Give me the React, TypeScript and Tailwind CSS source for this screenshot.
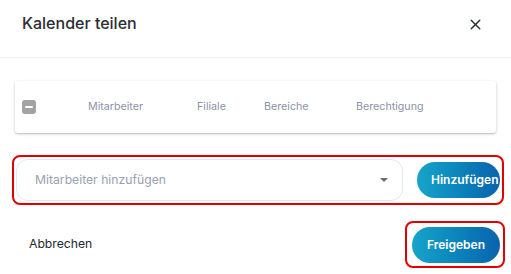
import { X } from 'lucide-react';

const columns = [
  { label: 'Mitarbeiter', width: 'w-[109px]' },
  { label: 'Filiale', width: 'w-[67px]' },
  { label: 'Bereiche', width: 'w-[92px]' },
  { label: 'Berechtigung', width: 'w-[100px]' },
];

export default function App() {
  return (
    <div className="w-[511px] h-[274px] bg-white overflow-hidden font-['Inter',sans-serif]">
      {/* Kopfzeile */}
      <div className="h-[58px] flex items-start justify-between px-[22px] pt-[12px] border-b border-[#f1f2f4]">
        <h2 className="text-[16px] leading-[22px] font-medium text-[#2a2d34]">Kalender teilen</h2>
        <button className="mt-[4px] mr-[5px] text-[#2a2d34]" title="Schließen">
          <X size={17} strokeWidth={2} />
        </button>
      </div>

      {/* Tabelle */}
      <div className="mx-[15px] mt-[23px] h-[52px] rounded-[3px] bg-white shadow-[0_1px_3px_rgba(0,0,0,0.22),0_1px_1px_rgba(0,0,0,0.08)] flex items-center">
        <div className="pl-[7px] w-[73px]">
          <span className="flex items-center justify-center w-[14px] h-[14px] rounded-[3px] bg-[#a3a3a3]">
            <span className="w-[8px] h-[2px] bg-white rounded-full"></span>
          </span>
        </div>
        {columns.map((c) => (
          <div key={c.label} className={`${c.width} text-[10.7px] text-[#8c93a9]`}>
            {c.label}
          </div>
        ))}
      </div>

      {/* Mitarbeiter hinzufügen */}
      <div className="ml-[12px] mt-[22px] w-[492px] h-[50px] border-2 border-[#e30000] rounded-[8px] flex items-center">
        <div className="ml-[2px] w-[387px] h-[42px] border border-[#e3e8f0] rounded-[12px] flex items-center justify-between pl-[18px] pr-[14px]">
          <span className="text-[12.2px] text-[#9aa1b2]">Mitarbeiter hinzufügen</span>
          <span className="w-0 h-0 border-l-[4px] border-r-[4px] border-t-[4px] border-l-transparent border-r-transparent border-t-[#6b6b6b]"></span>
        </div>
        <button className="ml-[14px] w-[83px] h-[36px] rounded-full overflow-hidden bg-gradient-to-r from-[#17a5c9] to-[#0b63ad] text-white text-[12px] font-semibold text-left pl-[14px] whitespace-nowrap">
          Hinzufügen
        </button>
      </div>

      {/* Fußzeile */}
      <div className="mt-[16px] flex items-center justify-between pl-[29px] pr-[6px]">
        <button className="text-[12.2px] text-[#23262d]">Abbrechen</button>
        <div className="w-[100px] h-[47px] border-2 border-[#e30000] rounded-[8px] pl-[5px] pt-[4px]">
          <button className="w-[88px] h-[36px] rounded-full bg-gradient-to-r from-[#17a5c9] to-[#0b63ad] text-white text-[12px] font-semibold">
            Freigeben
          </button>
        </div>
      </div>
    </div>
  );
}
